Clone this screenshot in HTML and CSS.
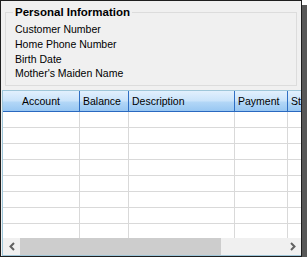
FILE: index.html
```html
<!DOCTYPE html>
<html lang="en">
<head>
    <meta charset="UTF-8">
    <title>Personal Information</title>
    <link rel="stylesheet" href="styles.css">
</head>
<body>
    <div class="window">
        <div class="group">
            <div class="group-title">Personal Information</div>
            <div class="field">Customer Number</div>
            <div class="field">Home Phone Number</div>
            <div class="field">Birth Date</div>
            <div class="field">Mother's Maiden Name</div>
        </div>
        <div class="grid">
            <div class="grid-header">
                <div class="col col-account center">Account</div>
                <div class="col col-balance">Balance</div>
                <div class="col col-desc">Description</div>
                <div class="col col-payment">Payment</div>
                <div class="col col-status">St</div>
            </div>
            <div class="grid-body">
                <div class="row"><div class="col col-account"></div><div class="col col-balance"></div><div class="col col-desc"></div><div class="col col-payment"></div><div class="col col-status"></div></div>
                <div class="row"><div class="col col-account"></div><div class="col col-balance"></div><div class="col col-desc"></div><div class="col col-payment"></div><div class="col col-status"></div></div>
                <div class="row"><div class="col col-account"></div><div class="col col-balance"></div><div class="col col-desc"></div><div class="col col-payment"></div><div class="col col-status"></div></div>
                <div class="row"><div class="col col-account"></div><div class="col col-balance"></div><div class="col col-desc"></div><div class="col col-payment"></div><div class="col col-status"></div></div>
                <div class="row"><div class="col col-account"></div><div class="col col-balance"></div><div class="col col-desc"></div><div class="col col-payment"></div><div class="col col-status"></div></div>
                <div class="row"><div class="col col-account"></div><div class="col col-balance"></div><div class="col col-desc"></div><div class="col col-payment"></div><div class="col col-status"></div></div>
                <div class="row"><div class="col col-account"></div><div class="col col-balance"></div><div class="col col-desc"></div><div class="col col-payment"></div><div class="col col-status"></div></div>
                <div class="row"><div class="col col-account"></div><div class="col col-balance"></div><div class="col col-desc"></div><div class="col col-payment"></div><div class="col col-status"></div></div>
            </div>
            <div class="hscroll">
                <div class="scroll-btn">
                    <svg width="8" height="9" viewBox="0 0 8 9"><polyline points="6,1 2.5,4.5 6,8" fill="none" stroke="#606060" stroke-width="2"/></svg>
                </div>
                <div class="scroll-thumb"></div>
                <div class="scroll-track"></div>
                <div class="scroll-btn">
                    <svg width="8" height="9" viewBox="0 0 8 9"><polyline points="2,1 5.5,4.5 2,8" fill="none" stroke="#606060" stroke-width="2"/></svg>
                </div>
            </div>
        </div>
    </div>
</body>
</html>
```

FILE: styles.css
```css
html, body {
    margin: 0;
    padding: 0;
    background: #fff;
    overflow: hidden;
}

body {
    font-family: 'Liberation Sans', Arial, sans-serif;
    font-size: 10.5px;
    color: #000;
}

.window {
    box-sizing: border-box;
    width: 302px;
    height: 257px;
    border: 1px solid #1e1e1e;
    background: #f0f0f0;
    box-shadow: 5px 5px 0 #575757;
    display: flex;
    flex-direction: column;
}

/* group box */
.group {
    box-sizing: border-box;
    height: 75px;
    margin: 11px 4px 0 4px;
    border: 1px solid #dcdcdc;
    padding-left: 7px;
    display: flex;
    flex-direction: column;
    align-items: flex-start;
}

.group-title {
    margin-top: -8px;
    padding: 0 2px;
    background: #f0f0f0;
    font-size: 11.5px;
    font-weight: bold;
    line-height: 15px;
}

.field {
    padding-left: 2px;
    line-height: 14.8px;
}

.group-title + .field {
    margin-top: 2px;
}

/* data grid */
.grid {
    flex-grow: 1;
    margin: 4px 0 0 1px;
    border: 1px solid #9ec6d9;
    border-right: none;
    background: #fff;
    display: flex;
    flex-direction: column;
    overflow: hidden;
}

.grid-header,
.row {
    display: flex;
    flex-shrink: 0;
}

.grid-header {
    height: 21px;
    box-sizing: border-box;
    border-bottom: 1px solid #2a69c0;
    background: linear-gradient(to bottom, #e2f0fd 0%, #c9e3fa 50%, #b3d7f7 55%, #98c7f2 100%);
    line-height: 20px;
}

.grid-header .col {
    border-right: 1px solid #2f6fc4;
    padding-left: 3px;
    white-space: nowrap;
    overflow: hidden;
}

.grid-header .center {
    text-align: center;
    padding-left: 0;
}

.col {
    box-sizing: border-box;
    flex-shrink: 0;
}

.col-account { width: 77px; }
.col-balance { width: 49px; }
.col-desc { width: 106px; }
.col-payment { width: 53px; }
.col-status { width: 60px; }

.grid-body {
    flex-grow: 1;
    overflow: hidden;
}

.row {
    height: 16px;
    box-sizing: border-box;
    border-bottom: 1px solid #d9d9d9;
}

.row .col {
    border-right: 1px solid #d9d9d9;
}

/* horizontal scrollbar */
.hscroll {
    height: 17px;
    flex-shrink: 0;
    display: flex;
    background: #f0f0f0;
}

.scroll-btn {
    width: 17px;
    display: flex;
    align-items: center;
    justify-content: center;
}

.scroll-thumb {
    width: 201px;
    background: #cdcdcd;
}

.scroll-track {
    flex-grow: 1;
}
```
